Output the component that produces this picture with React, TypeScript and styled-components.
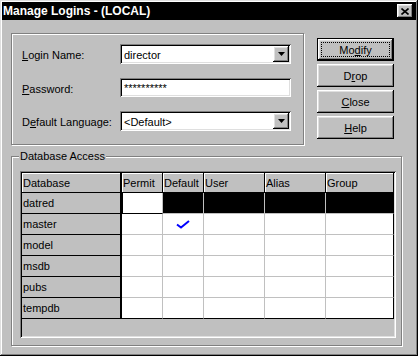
import React from 'react';
import styled, { createGlobalStyle, css } from 'styled-components';

const Global = createGlobalStyle`
  html, body { margin: 0; padding: 0; background: #c0c0c0; }
  body { font-family: "Liberation Sans", Arial, sans-serif; font-size: 11px; color: #000; }
  * { box-sizing: border-box; }
`;

const raised = css`
  box-shadow: inset -1px -1px #000, inset 1px 1px #fff, inset -2px -2px #808080, inset 2px 2px #dfdfdf;
`;

const sunken = css`
  box-shadow: inset 1px 1px #808080, inset -1px -1px #fff, inset 2px 2px #000, inset -2px -2px #dfdfdf;
`;

const Window = styled.div`
  width: 418px;
  height: 356px;
  background: #c0c0c0;
  padding: 2px;
  box-shadow: inset -1px -1px #000, inset 1px 1px #dfdfdf, inset -2px -2px #808080, inset 2px 2px #fff;
  display: flex;
  flex-direction: column;
`;

const TitleBar = styled.div`
  height: 18px;
  background: #000;
  color: #fff;
  font-weight: bold;
  font-size: 12px;
  padding-left: 1px;
  display: flex;
  align-items: center;
  justify-content: space-between;
`;

const CloseButton = styled.div`
  width: 16px;
  height: 14px;
  margin-right: 3px;
  background: #c0c0c0;
  ${raised};
  display: flex;
  align-items: center;
  justify-content: center;
`;

const Body = styled.div`
  padding: 13px 0 0 9px;
`;

const TopRow = styled.div`
  display: flex;
  align-items: flex-start;
`;

const Etched = styled.div`
  position: relative;
  border: 1px solid #808080;
  box-shadow: inset 1px 1px #fff, 1px 1px #fff;
`;

const LoginGroup = styled(Etched)`
  width: 293px;
  height: 112px;
  padding: 10px 0 0 10px;
  display: flex;
  flex-direction: column;
  gap: 14px;
`;

const FieldRow = styled.div<{ $h: number }>`
  display: flex;
  height: ${p => p.$h}px;
`;

const Label = styled.div<{ $drop: number }>`
  width: 98px;
  padding-top: ${p => p.$drop}px;
  line-height: 13px;
  white-space: nowrap;
`;

const Field = styled.div`
  width: 171px;
  height: 100%;
  background: #fff;
  ${sunken};
  display: flex;
  align-items: center;
  padding: 2px 2px 0 4px;
  white-space: nowrap;
`;

const FieldText = styled.span`
  flex: 1;
  line-height: 13px;
`;

const DropButton = styled.div`
  width: 16px;
  height: 16px;
  margin-top: -2px;
  background: #c0c0c0;
  ${raised};
  display: flex;
  align-items: center;
  justify-content: center;
`;

const ButtonColumn = styled.div`
  margin-left: 13px;
  margin-top: 5px;
  display: flex;
  flex-direction: column;
  gap: 3px;
`;

const PushButton = styled.div<{ $default?: boolean }>`
  position: relative;
  width: 77px;
  height: 23px;
  background: #c0c0c0;
  border: ${p => (p.$default ? '1px solid #000' : 'none')};
  ${raised};
  display: flex;
  align-items: center;
  justify-content: center;
  ${p =>
    p.$default &&
    css`
      &::after {
        content: '';
        position: absolute;
        inset: 3px;
        border: 1px dotted #000;
      }
    `}
`;

const DbGroup = styled(Etched)`
  width: 391px;
  height: 190px;
  margin-top: 11px;
  padding: 14px 0 0 8px;
`;

const Legend = styled.div`
  position: absolute;
  top: -7px;
  left: 7px;
  padding: 0 1px;
  line-height: 13px;
  background: #c0c0c0;
`;

const GridFrame = styled.div`
  width: 376px;
  height: 167px;
  padding: 2px;
  background: #c0c0c0;
  ${sunken};
`;

const Grid = styled.div`
  display: grid;
  grid-template-columns: 100px 41px 41px 61px 61px 68px;
  grid-template-rows: 20px repeat(6, 21px);
`;

const HeaderCell = styled.div<{ $first?: boolean }>`
  background: #c0c0c0;
  border-right: ${p => (p.$first ? 2 : 1)}px solid #000;
  border-bottom: 1px solid #000;
  box-shadow: inset 1px 1px #fff;
  padding-left: 1px;
  display: flex;
  align-items: center;
  white-space: nowrap;
  overflow: hidden;
`;

const RowHead = styled.div`
  background: #c0c0c0;
  border-right: 2px solid #000;
  border-bottom: 1px solid #000;
  padding-left: 1px;
  display: flex;
  align-items: center;
`;

const DataCell = styled.div<{ $selected?: boolean; $focus?: boolean; $lastCol?: boolean; $lastRow?: boolean }>`
  background: ${p => (p.$selected && !p.$focus ? '#000' : '#fff')};
  border-right: 1px solid ${p => (p.$lastCol ? '#000' : '#c0c0c0')};
  border-bottom: 1px solid ${p => (p.$lastRow || p.$focus ? '#000' : '#c0c0c0')};
  box-shadow: ${p => (p.$focus ? 'inset 1px 0 #000' : 'none')};
  display: flex;
  align-items: center;
  justify-content: center;
`;

const Check = () => (
  <svg width="14" height="9" viewBox="0 0 14 9">
    <path d="M1 4.5 L5 7.5 L13 1" fill="none" stroke="#0000ff" strokeWidth="2" strokeLinejoin="miter" />
  </svg>
);

const Arrow = () => (
  <svg width="7" height="4" viewBox="0 0 7 4">
    <path d="M0 0 H7 L3.5 4 Z" fill="#000" />
  </svg>
);

const CloseX = () => (
  <svg width="8" height="7" viewBox="0 0 8 7">
    <path d="M0.5 0.5 L7.5 6.5 M7.5 0.5 L0.5 6.5" stroke="#000" strokeWidth="1.6" />
  </svg>
);

const columns = ['Permit', 'Default', 'User', 'Alias', 'Group'];
const databases = ['datred', 'master', 'model', 'msdb', 'pubs', 'tempdb'];

export default function App() {
  return (
    <>
      <Global />
      <Window>
        <TitleBar>
          <span>Manage Logins - (LOCAL)</span>
          <CloseButton>
            <CloseX />
          </CloseButton>
        </TitleBar>
        <Body>
          <TopRow>
            <LoginGroup>
              <FieldRow $h={20}>
                <Label $drop={5}>
                  <u>L</u>ogin Name:
                </Label>
                <Field>
                  <FieldText>director</FieldText>
                  <DropButton>
                    <Arrow />
                  </DropButton>
                </Field>
              </FieldRow>
              <FieldRow $h={19}>
                <Label $drop={5}>
                  <u>P</u>assword:
                </Label>
                <Field>
                  <FieldText>**********</FieldText>
                </Field>
              </FieldRow>
              <FieldRow $h={20}>
                <Label $drop={5}>
                  D<u>e</u>fault Language:
                </Label>
                <Field>
                  <FieldText>&lt;Default&gt;</FieldText>
                  <DropButton>
                    <Arrow />
                  </DropButton>
                </Field>
              </FieldRow>
            </LoginGroup>
            <ButtonColumn>
              <PushButton $default>
                Mo<u>d</u>ify
              </PushButton>
              <PushButton>
                D<u>r</u>op
              </PushButton>
              <PushButton>
                <u>C</u>lose
              </PushButton>
              <PushButton>
                <u>H</u>elp
              </PushButton>
            </ButtonColumn>
          </TopRow>
          <DbGroup>
            <Legend>Database Access</Legend>
            <GridFrame>
              <Grid>
                <HeaderCell $first>Database</HeaderCell>
                {columns.map(c => (
                  <HeaderCell key={c}>{c}</HeaderCell>
                ))}
                {databases.map((db, r) => (
                  <React.Fragment key={db}>
                    <RowHead>{db}</RowHead>
                    {columns.map((c, ci) => (
                      <DataCell
                        key={c}
                        $selected={r === 0}
                        $focus={r === 0 && ci === 0}
                        $lastCol={ci === columns.length - 1}
                        $lastRow={r === databases.length - 1}
                      >
                        {db === 'master' && c === 'Default' ? <Check /> : null}
                      </DataCell>
                    ))}
                  </React.Fragment>
                ))}
              </Grid>
            </GridFrame>
          </DbGroup>
        </Body>
      </Window>
    </>
  );
}
